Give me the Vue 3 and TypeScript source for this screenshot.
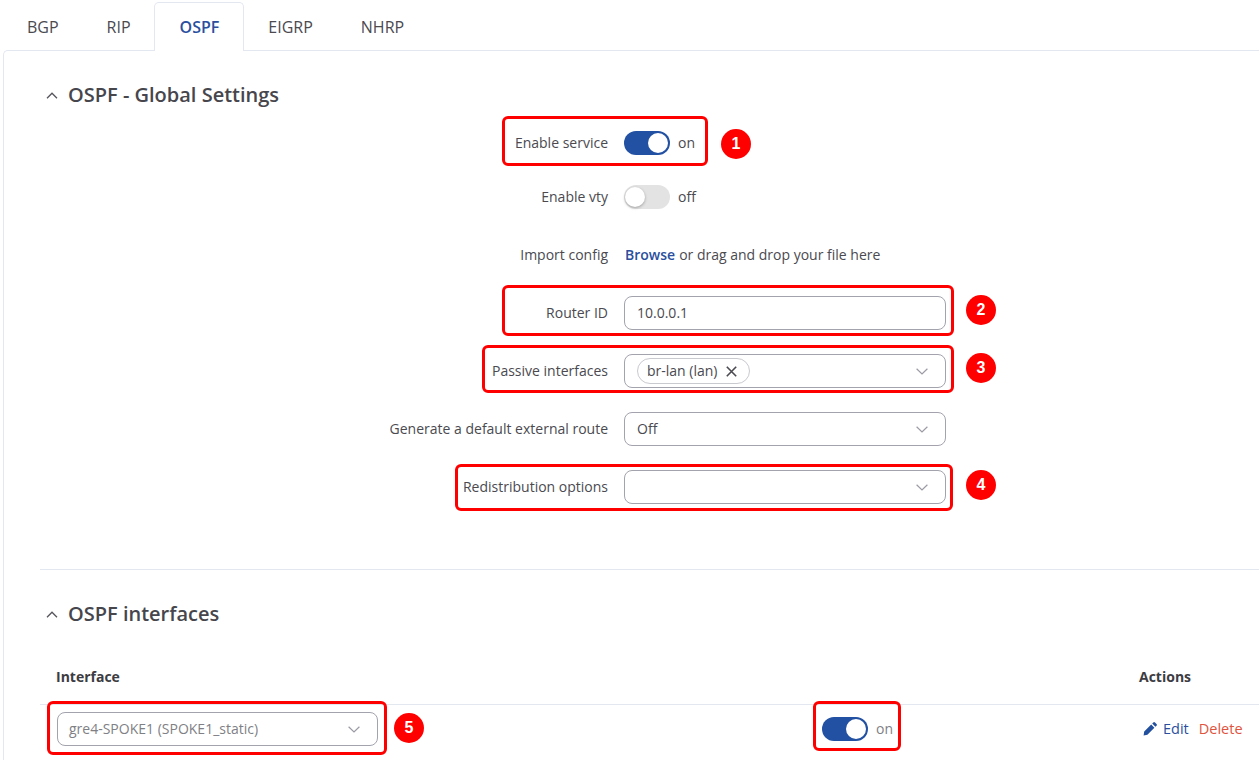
<script setup lang="ts">
const tabs: { name: string; active?: boolean }[] = [
  { name: 'BGP' },
  { name: 'RIP' },
  { name: 'OSPF', active: true },
  { name: 'EIGRP' },
  { name: 'NHRP' },
]
</script>

<template>
  <div class="page">
    <nav class="tabs">
      <a v-for="t in tabs" :key="t.name" class="tab" :class="{ active: t.active }">{{ t.name }}</a>
    </nav>
    <main class="panel">
      <header class="section-head">
        <svg class="caret" width="12" height="7" viewBox="0 0 12 7"><path d="M1 6.2 6 1.2l5 5" fill="none" stroke="#55555c" stroke-width="1.3" /></svg>
        <h2>OSPF - Global Settings</h2>
      </header>

      <div class="row row-switch first">
        <label class="lbl">Enable service</label>
        <span class="switch on"><i></i></span><span class="state">on</span>
        <span class="mark m1"></span><b class="badge b1">1</b>
      </div>
      <div class="row row-switch second">
        <label class="lbl">Enable vty</label>
        <span class="switch"><i></i></span><span class="state">off</span>
      </div>
      <div class="row">
        <label class="lbl">Import config</label>
        <span class="browse">Browse</span><span class="drop">or drag and drop your file here</span>
      </div>
      <div class="row">
        <label class="lbl">Router ID</label>
        <div class="input">10.0.0.1</div>
        <span class="mark m2"></span><b class="badge b2">2</b>
      </div>
      <div class="row">
        <label class="lbl">Passive interfaces</label>
        <div class="input select">
          <span class="chip">br-lan (lan)
            <svg width="11" height="11" viewBox="0 0 11 11"><path d="M.8.8l9.4 9.4M10.2.8.8 10.2" stroke="#4a4a50" stroke-width="1.6" fill="none" /></svg>
          </span>
          <svg class="chev" width="12" height="7" viewBox="0 0 12 7"><path d="M.6.8 6 6l5.4-5.2" fill="none" stroke="#9b9ba6" stroke-width="1.2" /></svg>
        </div>
        <span class="mark m3"></span><b class="badge b3">3</b>
      </div>
      <div class="row">
        <label class="lbl">Generate a default external route</label>
        <div class="input select">Off
          <svg class="chev" width="12" height="7" viewBox="0 0 12 7"><path d="M.6.8 6 6l5.4-5.2" fill="none" stroke="#9b9ba6" stroke-width="1.2" /></svg>
        </div>
      </div>
      <div class="row">
        <label class="lbl">Redistribution options</label>
        <div class="input select">
          <svg class="chev" width="12" height="7" viewBox="0 0 12 7"><path d="M.6.8 6 6l5.4-5.2" fill="none" stroke="#9b9ba6" stroke-width="1.2" /></svg>
        </div>
        <span class="mark m4"></span><b class="badge b4">4</b>
      </div>

      <hr class="divider" />

      <header class="section-head second-head">
        <svg class="caret" width="12" height="7" viewBox="0 0 12 7"><path d="M1 6.2 6 1.2l5 5" fill="none" stroke="#55555c" stroke-width="1.3" /></svg>
        <h2>OSPF interfaces</h2>
      </header>

      <div class="thead">
        <span>Interface</span>
        <span></span>
        <span>Actions</span>
      </div>
      <div class="tbody">
        <div class="cell">
          <div class="input select muted narrow">gre4-SPOKE1 (SPOKE1_static)
            <svg class="chev" width="12" height="7" viewBox="0 0 12 7"><path d="M.6.8 6 6l5.4-5.2" fill="none" stroke="#9b9ba6" stroke-width="1.2" /></svg>
          </div>
          <span class="mark m5"></span><b class="badge b5">5</b>
        </div>
        <div class="cell">
          <span class="switch on"><i></i></span><span class="state muted-state">on</span>
          <span class="mark m6"></span>
        </div>
        <div class="cell actions">
          <svg width="14" height="14" viewBox="0 0 14 14"><path d="M.6 13.4 1.2 9.6l7-7 3.2 3.2-7 7zM9.2 1.6 10.3.5a1.2 1.2 0 0 1 1.7 0l1.5 1.5a1.2 1.2 0 0 1 0 1.7l-1.1 1.1z" fill="#23509e" /></svg>
          <a class="edit">Edit</a>
          <a class="delete">Delete</a>
        </div>
      </div>
    </main>
  </div>
</template>

<style scoped>
.page {
  height: 760px;
  overflow: hidden;
  background: #fff;
  font-family: "Open Sans", "Liberation Sans", sans-serif;
  font-size: 14px;
  color: #4a4a50;
}
.tabs {
  display: flex;
  height: 50px;
  padding: 2px 0 0 3px;
  box-sizing: border-box;
}
.tab {
  padding: 0 24px;
  height: 49px;
  line-height: 50px;
  font-size: 16px;
  color: #4a4a50;
}
.tab.active {
  position: relative;
  z-index: 1;
  height: 48px;
  line-height: 49px;
  padding-left: 25px;
  background: #fff;
  border: 1px solid #e3e7ef;
  border-bottom: 0;
  border-radius: 5px 5px 0 0;
  color: #2a4f9e;
  font-weight: 600;
  margin-left: -1px;
}
.panel {
  margin-left: 3px;
  border-left: 1px solid #e3e7ef;
  border-top: 1px solid #e3e7ef;
  border-top-left-radius: 5px;
  padding: 30px 0 0 36px;
  height: 720px;
  box-sizing: border-box;
}
.section-head {
  display: flex;
  align-items: center;
  gap: 10px;
  height: 28px;
  padding-left: 6px;
}
.section-head h2 {
  margin: -2px 0 0;
  font-size: 20px;
  font-weight: 600;
  color: #46464c;
}
.second-head {
  margin-top: 30px;
}
.row {
  position: relative;
  display: flex;
  align-items: center;
  height: 34px;
  margin-bottom: 24px;
}
.row-switch {
  height: 24px;
}
.row-switch.first {
  margin-top: 22px;
  margin-bottom: 30px;
}
.row-switch.second {
  margin-bottom: 29px;
}
.lbl {
  width: 568px;
  margin: -2px 16px 0 0;
  text-align: right;
  color: #4a4a50;
}
.switch {
  position: relative;
  display: inline-block;
  flex: none;
  width: 46px;
  height: 24px;
  border-radius: 12px;
  background: #e3e3e3;
}
.switch i {
  position: absolute;
  left: 1px;
  top: 2px;
  width: 20px;
  height: 20px;
  box-sizing: border-box;
  border-radius: 50%;
  background: #fff;
  box-shadow: 0 1px 3px rgba(0, 0, 0, 0.3);
}
.switch.on {
  background: #2250a2;
}
.switch.on i {
  left: 24px;
  top: 2px;
  box-shadow: none;
}
.state {
  margin: -2px 0 0 8px;
  color: #4a4a50;
}
.muted-state {
  color: #7f7f86;
}
.browse {
  margin: -2px 0 0 1px;
  color: #2a4f9e;
  font-weight: 600;
}
.drop {
  margin: -2px 0 0 4px;
}
.input {
  position: relative;
  display: flex;
  align-items: center;
  flex: none;
  width: 322px;
  height: 34px;
  box-sizing: border-box;
  padding: 0 0 2px 12px;
  border: 1px solid #a3a3ad;
  border-radius: 8px;
  background: #fff;
  color: #4a4a50;
}
.narrow {
  width: 321px;
  padding-left: 11px;
}
.chev {
  position: absolute;
  right: 17px;
  top: 13px;
}
.chip {
  display: inline-flex;
  align-items: center;
  gap: 8px;
  height: 26px;
  margin-top: 2px;
  box-sizing: border-box;
  padding: 0 12px 2px 9px;
  border: 1px solid #c9c9d0;
  border-radius: 13px;
}
.chip svg {
  margin-top: 2px;
}
.muted {
  color: #7f7f86;
}
.divider {
  margin: 65px 0 0;
  border: 0;
  border-top: 1px solid #e3e7ef;
}
.thead,
.tbody {
  display: grid;
  grid-template-columns: 782px 317px 1fr;
  align-items: center;
}
.thead {
  margin-top: 22px;
  height: 52px;
  padding-bottom: 2px;
  border-bottom: 1px solid #e3e7ef;
  font-weight: 700;
  color: #3c3c42;
}
.thead span:first-child {
  padding-left: 16px;
}
.tbody {
  padding-top: 7px;
}
.cell {
  position: relative;
  display: flex;
  align-items: center;
  height: 34px;
}
.cell:first-child {
  padding-left: 17px;
}
.actions svg {
  margin: 0 6px 0 4px;
  flex: none;
}
.edit {
  margin-top: -2px;
  font-size: 14.5px;
  color: #2a4f9e;
  font-weight: 500;
}
.delete {
  margin: -2px 0 0 10px;
  font-size: 14.5px;
  color: #e0533d;
  font-weight: 500;
}
.mark {
  position: absolute;
  box-sizing: border-box;
  border: 3px solid #f00;
  border-radius: 6px;
  pointer-events: none;
}
.m1 { left: 462px; top: -15px; width: 206px; height: 50px; }
.m2 { left: 462px; top: -11px; width: 452px; height: 51px; }
.m3 { left: 442px; top: -9px; width: 472px; height: 48px; }
.m4 { left: 415px; top: -6px; width: 498px; height: 47px; }
.m5 { left: 7px; top: -11px; width: 340px; height: 54px; }
.m6 { left: -9px; top: -11px; width: 88px; height: 50px; }
.badge {
  position: absolute;
  width: 30px;
  height: 30px;
  border-radius: 50%;
  background: #f00;
  color: #fff;
  font-family: "Liberation Sans", sans-serif;
  font-size: 16px;
  font-weight: 700;
  line-height: 30px;
  text-align: center;
}
.b1 { left: 681px; top: -2px; }
.b2 { left: 926px; top: -1px; }
.b3 { left: 926px; top: -1px; }
.b4 { left: 926px; top: 0; }
.b5 { left: 354px; top: 1px; }
</style>

<style>
html, body { margin: 0; overflow: hidden; }
</style>
